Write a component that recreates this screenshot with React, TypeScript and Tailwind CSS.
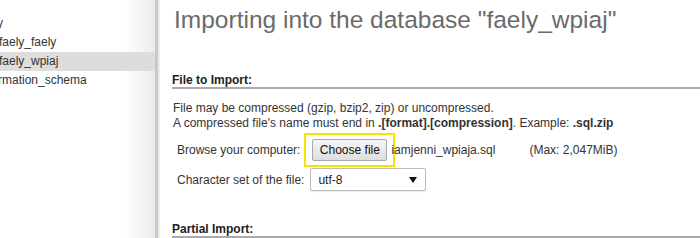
export default function App() {
  return (
    <div
      className="flex h-[238px] w-[700px] overflow-hidden bg-white text-[#444]"
      style={{ fontFamily: '"Liberation Sans", Arial, sans-serif' }}
    >
      {/* navigation panel */}
      <div className="flex w-[160px] shrink-0">
        <div className="flex-1 bg-gradient-to-r from-white from-[80%] to-[#ebebeb] pt-[14px] text-[12px] leading-[19px] text-[#333]">
          <div className="-ml-[3px]">y</div>
          <div className="-ml-[1px]">faely_faely</div>
          <div className="bg-[#dddddd]">
            <span className="-ml-[1px] block">faely_wpiaj</span>
          </div>
          <div className="-ml-[2px]">rmation_schema</div>
        </div>
        <div className="w-[3px] bg-[#c8c8c8]"></div>
        <div className="w-[2px] bg-[#ececec]"></div>
      </div>

      {/* main */}
      <div className="flex-1 pl-[12px] pt-[3px]">
        <h2 className="pl-[2px] text-[24.5px] leading-[33px] text-[#6b6b6b]">
          Importing into the database "faely_wpiaj"
        </h2>

        <div className="mt-[37px] border-b-2 border-[#aaa] text-[12px] font-bold leading-[14px] text-[#222]">
          File to Import:
        </div>

        <div className="mt-[12px] pl-[1px] text-[12px] leading-[15px] text-[#333]">
          <div>File may be compressed (gzip, bzip2, zip) or uncompressed.</div>
          <div>
            A compressed file's name must end in <b>.[format].[compression]</b>.
            Example: <b>.sql.zip</b>
          </div>
        </div>

        <div className="mt-[2px] flex items-center pl-[5px] text-[12px] text-[#333]">
          <span>Browse your computer:</span>
          <div className="ml-[4px] border-2 border-[#f5e400] px-[6px] py-[4px]">
            <button className="block h-[22px] w-[75px] rounded-[2px] border border-[#a9a9a9] bg-gradient-to-b from-[#f6f6f6] to-[#dedede] text-[12px] text-[#111]">
              Choose file
            </button>
          </div>
          <span className="-ml-[4px]">iamjenni_wpiaja.sql</span>
          <span className="ml-[34px]">(Max: 2,047MiB)</span>
        </div>

        <div className="mt-[1px] flex items-center pl-[5px] text-[12px] text-[#333]">
          <span>Character set of the file:</span>
          <div className="ml-[6px] flex h-[23px] w-[116px] items-center justify-between rounded-[2px] border border-[#bbb] bg-white pl-[7px] pr-[8px] shadow-[0_1px_1px_rgba(0,0,0,0.08)]">
            <span className="text-[#222]">utf-8</span>
            <svg width="8" height="6" viewBox="0 0 8 6">
              <path d="M0 0h8L4 6z" fill="#111" />
            </svg>
          </div>
        </div>

        <div className="mt-[31px] border-b-2 border-[#aaa] text-[12px] font-bold leading-[14px] text-[#222]">
          Partial Import:
        </div>
      </div>
    </div>
  );
}
